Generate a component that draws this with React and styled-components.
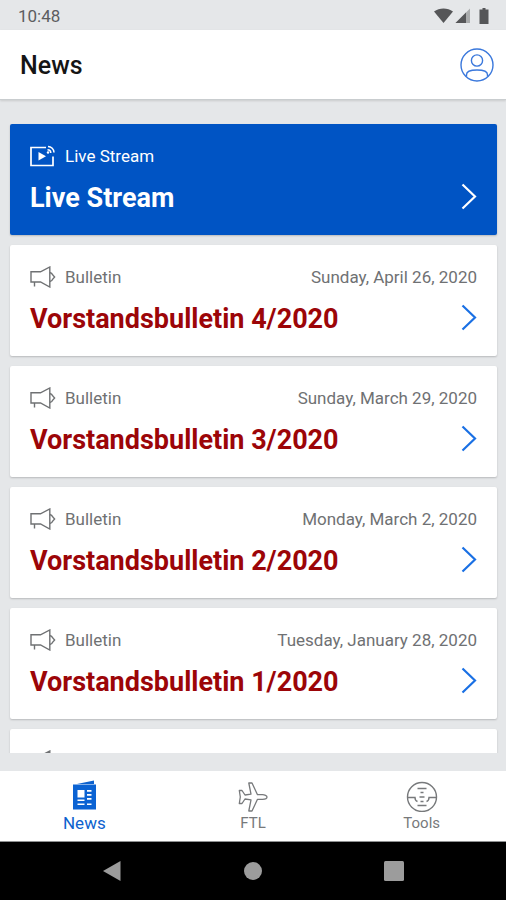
import React from "react";
import styled, { createGlobalStyle } from "styled-components";

const GlobalStyle = createGlobalStyle`
  * {
    box-sizing: border-box;
  }
  body {
    margin: 0;
    font-family: Roboto, "Liberation Sans", sans-serif;
    background: #e5e7e9;
  }
`;

const Screen = styled.div`
  display: flex;
  flex-direction: column;
  height: 100vh;
  background: #e5e7e9;
`;

const StatusBar = styled.div`
  display: flex;
  align-items: center;
  justify-content: space-between;
  height: 30px;
  padding: 2px 14px 0 18px;
  color: #5c5d5f;
  font-size: 17px;
`;

const StatusIcons = styled.svg`
  width: 59px;
  height: 18px;
`;

const Header = styled.header`
  display: flex;
  align-items: center;
  justify-content: space-between;
  height: 70px;
  padding: 0 12px 0 20px;
  background: #fff;
  border-bottom: 1px solid #c9cdcf;
  box-shadow: 0 1px 2px rgba(0, 0, 0, 0.12);
`;

const HeaderTitle = styled.h1`
  margin: 0;
  padding-top: 2px;
  color: #151515;
  font-size: 25px;
  font-weight: 500;
`;

const IconButton = styled.button`
  display: flex;
  padding: 0;
  border: 0;
  background: none;
  color: #3a78dc;
  cursor: pointer;
`;

const Feed = styled.main`
  flex: 1;
  min-height: 0;
  margin-bottom: 18px;
  padding: 24px 9px 0 10px;
  overflow: hidden;
`;

const Card = styled.a`
  display: flex;
  flex-direction: column;
  gap: 8px;
  height: 111px;
  margin-bottom: 10px;
  padding: 20px 20px 0;
  border-radius: 2px;
  background: ${props => (props.$live ? "#0054c4" : "#fff")};
  color: ${props => (props.$live ? "#fff" : "#6f7173")};
  box-shadow: 0 1px 2px rgba(0, 0, 0, 0.2);
  text-decoration: none;
`;

const CardMeta = styled.div`
  display: flex;
  align-items: center;
  gap: 9px;
  height: 24px;
  font-size: 17px;
`;

const CardDate = styled.time`
  margin-left: auto;
`;

const CardMain = styled.div`
  display: flex;
  align-items: center;
  justify-content: space-between;
  height: 42px;
  color: ${props => (props.$live ? "#fff" : "#1a70e4")};
`;

const CardTitle = styled.h2`
  margin: 0;
  padding-top: 2px;
  color: ${props => (props.$live ? "#fff" : "#9c0508")};
  font-size: 27px;
  font-weight: 700;
`;

const TabBar = styled.nav`
  display: flex;
  height: 71px;
  background: #fff;
  border-bottom: 1px solid #8f9192;
`;

const Tab = styled.a`
  display: flex;
  flex: 1;
  flex-direction: column;
  align-items: center;
  gap: 1px;
  padding-top: 9px;
  color: ${props => (props.$active ? "#0d62ce" : "#77797b")};
  font-size: ${props => (props.$active ? "17px" : "15px")};
  line-height: 21px;
  text-decoration: none;
`;

const SystemNav = styled.nav`
  display: flex;
  height: 58px;
  padding: 0 42px;
  background: #000;
`;

const SystemButton = styled.button`
  display: flex;
  flex: 1;
  align-items: center;
  justify-content: center;
  padding: 0;
  border: 0;
  background: none;
  color: #9c9c9c;
  cursor: pointer;
`;

const ProfileIcon = () => (
  <svg width="34" height="34" viewBox="0 0 34 34" fill="none" stroke="currentColor" strokeWidth="1.4">
    <circle cx="17" cy="17" r="16" />
    <circle cx="17" cy="12.5" r="5.6" />
    <path d="M6.5 28.5v-1.8c0-3 4.5-4.700 10.5-4.700s10.5 1.700 10.5 4.700v1.800" />
  </svg>
);

const LiveIcon = () => (
  <svg width="26" height="22" viewBox="0 0 26 22" fill="none" stroke="currentColor" strokeWidth="1.7">
    <path d="M16 2.5H1V20.5H23V11.5" />
    <path d="M8.5 7v8.5l7.5-4.250z" fill="currentColor" stroke="none" />
    <path d="M18 1.5c3.300 0 6 2.700 6 6M17.5 4.800c1.900 0 3.300 1.400 3.300 3.300" strokeWidth="1.5" />
    <circle cx="18" cy="7.5" r="1.2" fill="currentColor" stroke="none" />
  </svg>
);

const MegaphoneIcon = () => (
  <svg width="26" height="22" viewBox="0 0 26 22" fill="none" stroke="currentColor" strokeWidth="1.4">
    <path d="M1 5.800h9.5L19.800 1v20l-9.300-5H1z" />
    <path d="M4.5 16v4.5M19.800 6.5c2 .3 2.500 1.200 3 2.500l1.800 2-1.800 2c-.5 1.300-1 2.200-3 2.500" />
  </svg>
);

const ChevronIcon = () => (
  <svg width="16" height="28" viewBox="0 0 16 28" fill="none" stroke="currentColor" strokeWidth="2.2">
    <path d="M1.5 1.500L14 13.500 1.5 25.500" />
  </svg>
);

const NewsIcon = () => (
  <svg width="30" height="32" viewBox="0 0 30 32">
    <path d="M8 4L25 .5V4z" fill="#0d62ce" />
    <rect x="4" y="4.5" width="23" height="25" fill="#0b63d3" />
    <path
      d="M8.5 10h7v7.5h-7zM18 10h4.5v1.800h-4.5zM18 14h4.5v1.800h-4.5zM18 18h4.5v1.800h-4.5zM8.5 19.5h7v1.5h-7zM8.5 23.5h7v1.5h-7zM18 23.5h4.5v1.5h-4.5z"
      fill="#fff"
    />
  </svg>
);

const PlaneIcon = () => (
  <svg width="30" height="32" viewBox="0 0 30 32" fill="none" stroke="currentColor" strokeWidth="1.3" strokeLinejoin="round">
    <path d="M29 17c0-1.500-2.500-2.300-4.500-2.300h-5L14 3H10.800l2.200 11.200-6 .8L4 10.500H1.300L2.300 17 1.300 23.5H4L7 19l6 .8L10.800 31H14l5.500-11.700h5c2 0 4.500-.8 4.500-2.300z" />
  </svg>
);

const ToolsIcon = () => (
  <svg width="32" height="32" viewBox="0 0 32 32" fill="none" stroke="currentColor" strokeWidth="1.4">
    <circle cx="16" cy="17" r="14.5" />
    <path d="M11.5 8.5h9M14.5 12.5h3M11.5 25.5h9M14.5 21.5h3M1.5 17.5h7.5c0 2 1 3.500 2.500 4M30.5 17.5H23c0 2-1 3.500-2.500 4M13.500 17h5" />
  </svg>
);

const bulletins = [
  { title: "Vorstandsbulletin 4/2020", date: "Sunday, April 26, 2020" },
  { title: "Vorstandsbulletin 3/2020", date: "Sunday, March 29, 2020" },
  { title: "Vorstandsbulletin 2/2020", date: "Monday, March 2, 2020" },
  { title: "Vorstandsbulletin 1/2020", date: "Tuesday, January 28, 2020" },
];

const NewsCard = ({ live, icon, category, date, title }) => (
  <Card href="#" $live={live}>
    <CardMeta>
      {icon}
      <span>{category}</span>
      {date && <CardDate>{date}</CardDate>}
    </CardMeta>
    <CardMain $live={live}>
      <CardTitle $live={live}>{title}</CardTitle>
      <ChevronIcon />
    </CardMain>
  </Card>
);

const App = () => (
  <Screen>
    <GlobalStyle />
    <StatusBar>
      <span>10:48</span>
      <StatusIcons viewBox="0 0 59 18" fill="#555658">
        <path d="M1 4.500C6.500.5 14.500.5 20 4.500L10.500 16z" />
        <path d="M37 1.500V16H22.500z" fill="#a9abac" />
        <path d="M33 5.500V16H22.500z" />
        <path d="M49.500 1h3v1.500h3V17h-9V2.500h3z" />
      </StatusIcons>
    </StatusBar>
    <Header>
      <HeaderTitle>News</HeaderTitle>
      <IconButton aria-label="Profile">
        <ProfileIcon />
      </IconButton>
    </Header>
    <Feed>
      <NewsCard live icon={<LiveIcon />} category="Live Stream" title="Live Stream" />
      {bulletins.map(bulletin => (
        <NewsCard
          key={bulletin.title}
          icon={<MegaphoneIcon />}
          category="Bulletin"
          date={bulletin.date}
          title={bulletin.title}
        />
      ))}
      <Card href="#" aria-label="Bulletin">
        <CardMeta>
          <MegaphoneIcon />
        </CardMeta>
      </Card>
    </Feed>
    <TabBar>
      <Tab href="#" $active>
        <NewsIcon />
        News
      </Tab>
      <Tab href="#">
        <PlaneIcon />
        FTL
      </Tab>
      <Tab href="#">
        <ToolsIcon />
        Tools
      </Tab>
    </TabBar>
    <SystemNav>
      <SystemButton aria-label="Back">
        <svg width="20" height="22" viewBox="0 0 20 22" fill="currentColor">
          <path d="M18.500 1v20L1 11z" />
        </svg>
      </SystemButton>
      <SystemButton aria-label="Home">
        <svg width="18" height="18" viewBox="0 0 18 18" fill="currentColor">
          <circle cx="9" cy="9" r="9" />
        </svg>
      </SystemButton>
      <SystemButton aria-label="Recent apps">
        <svg width="20" height="20" viewBox="0 0 20 20" fill="currentColor">
          <rect width="20" height="20" rx="1.500" />
        </svg>
      </SystemButton>
    </SystemNav>
  </Screen>
);

export default App;
